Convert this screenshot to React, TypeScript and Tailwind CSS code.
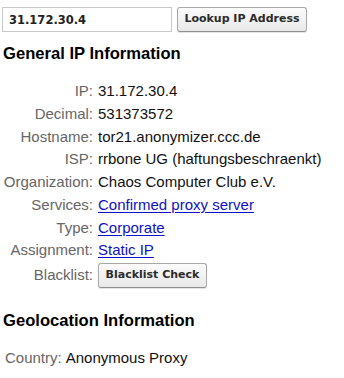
import React from 'react';

const sans = { fontFamily: '"Liberation Sans", Arial, sans-serif' };

interface InfoRow {
  label: string;
  value: string;
  link?: boolean;
}

const generalRows: InfoRow[] = [
  { label: 'IP:', value: '31.172.30.4' },
  { label: 'Decimal:', value: '531373572' },
  { label: 'Hostname:', value: 'tor21.anonymizer.ccc.de' },
  { label: 'ISP:', value: 'rrbone UG (haftungsbeschraenkt)' },
  { label: 'Organization:', value: 'Chaos Computer Club e.V.' },
  { label: 'Services:', value: 'Confirmed proxy server', link: true },
  { label: 'Type:', value: 'Corporate', link: true },
  { label: 'Assignment:', value: 'Static IP', link: true },
];

const buttonClass =
  "h-[25px] rounded-[3px] border border-[#a9a9a9] border-b-[#8e8e8e] bg-gradient-to-b from-[#fbfbfb] to-[#e9e9e9] shadow-[0_1px_1px_rgba(0,0,0,0.12)] font-['DejaVu_Sans',sans-serif] text-[11px] font-bold text-[#2b2b2b]";

const App: React.FC = () => {
  return (
    <div className="min-h-[378px] w-[344px] bg-white pl-[2px] pt-[7px]" style={sans}>
      {/* lookup form */}
      <div className="flex items-center gap-[5px]">
        <input
          defaultValue="31.172.30.4"
          className="h-[25px] w-[170px] border border-[#c8c8c8] bg-white pl-[6px] font-['DejaVu_Sans',sans-serif] text-[11.5px] font-bold text-[#222] outline-none"
        />
        <button className={`${buttonClass} w-[130px]`}>Lookup IP Address</button>
      </div>

      <h2 className="mt-[12px] pl-[1px] text-[16.6px] font-bold leading-[20px] text-black">General IP Information</h2>

      <div className="mt-[16px] grid grid-cols-[91px_1fr] gap-x-[5px] text-[15px] leading-[22.75px]">
        {generalRows.map((row) => (
          <React.Fragment key={row.label}>
            <div className="h-[22.75px] text-right text-[#666]">{row.label}</div>
            <div className="h-[22.75px] whitespace-nowrap">
              {row.link ? (
                <a href="#" className="text-[#1010c8] underline underline-offset-[2px]">
                  {row.value}
                </a>
              ) : (
                <span className="text-[#111]">{row.value}</span>
              )}
            </div>
          </React.Fragment>
        ))}
        <div className="flex h-[27px] items-center justify-end text-[#666]">Blacklist:</div>
        <div className="flex h-[27px] items-center">
          <button className={`${buttonClass} h-[24px] w-[109px]`}>Blacklist Check</button>
        </div>
      </div>

      <h2 className="mt-[22px] pl-[1px] text-[16.6px] font-bold leading-[20px] text-black">Geolocation Information</h2>

      <div className="mt-[15px] flex gap-[4px] pl-[3px] text-[15px] leading-[23px]">
        <span className="text-[#666]">Country:</span>
        <span className="text-[#111]">Anonymous Proxy</span>
      </div>
    </div>
  );
};

export default App;
